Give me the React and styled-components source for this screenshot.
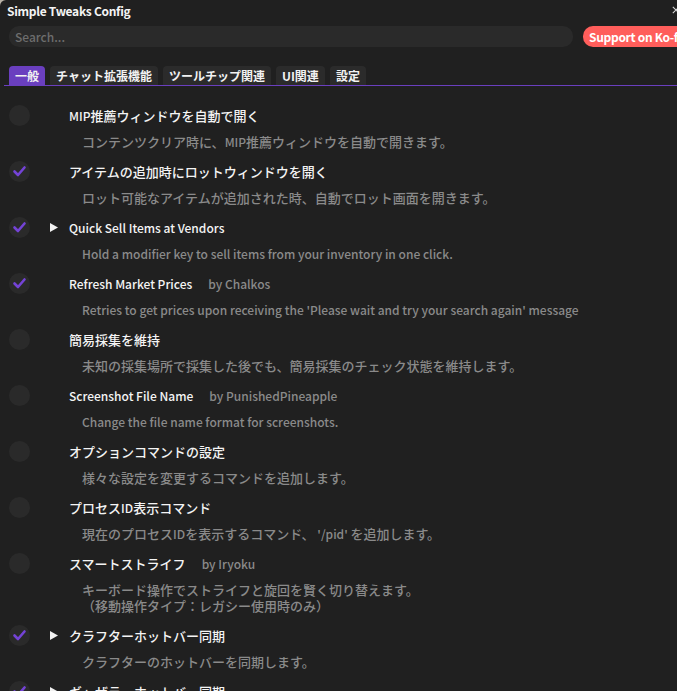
import styled, { createGlobalStyle } from 'styled-components';

const GlobalStyle = createGlobalStyle`
  html, body {
    margin: 0;
    padding: 0;
    background: #b9b2a6;
  }
  body {
    font-family: "Noto Sans CJK JP", "Noto Sans", sans-serif;
  }
`;

const features = [
  { on: false, title: 'MIP推薦ウィンドウを自動で開く', desc: ['コンテンツクリア時に、MIP推薦ウィンドウを自動で開きます。'] },
  { on: true, title: 'アイテムの追加時にロットウィンドウを開く', desc: ['ロット可能なアイテムが追加された時、自動でロット画面を開きます。'] },
  { on: true, arrow: true, title: 'Quick Sell Items at Vendors', desc: ['Hold a modifier key to sell items from your inventory in one click.'] },
  { on: true, title: 'Refresh Market Prices', author: 'Chalkos', desc: ["Retries to get prices upon receiving the 'Please wait and try your search again' message"] },
  { on: false, title: '簡易採集を維持', desc: ['未知の採集場所で採集した後でも、簡易採集のチェック状態を維持します。'] },
  { on: false, title: 'Screenshot File Name', author: 'PunishedPineapple', desc: ['Change the file name format for screenshots.'] },
  { on: false, title: 'オプションコマンドの設定', desc: ['様々な設定を変更するコマンドを追加します。'] },
  { on: false, title: 'プロセスID表示コマンド', desc: ["現在のプロセスIDを表示するコマンド、 '/pid' を追加します。"] },
  { on: false, title: 'スマートストライフ', author: 'Iryoku', desc: ['キーボード操作でストライフと旋回を賢く切り替えます。', '（移動操作タイプ：レガシー使用時のみ）'] },
  { on: true, arrow: true, title: 'クラフターホットバー同期', desc: ['クラフターのホットバーを同期します。'] },
  { on: true, arrow: true, title: 'ギャザラーホットバー同期', desc: ['ギャザラーのホットバーを同期します。'] },
];

const tabs = ['一般', 'チャット拡張機能', 'ツールチップ関連', 'UI関連', '設定'];

// the game font draws latin glyphs a size smaller than the japanese ones
const Mixed = ({ text }) =>
  text.split(/([\x20-\x7e]+)/).filter(Boolean).map((run, i) =>
    /^[\x20-\x7e]+$/.test(run) ? <Latin key={i}>{run}</Latin> : <span key={i}>{run}</span>
  );

const App = () => {
  return (
    <Viewport>
      <GlobalStyle />
      <Window>
        <TitleBar>
          <Title>Simple Tweaks Config</Title>
          <CloseIcon viewBox="0 0 10 10">
            <path d="M1 1 L9 9 M9 1 L1 9" />
          </CloseIcon>
        </TitleBar>

        <SearchRow>
          <Search>Search...</Search>
          <KofiButton>Support on Ko-fi</KofiButton>
        </SearchRow>

        <TabBar>
          {tabs.map((t, i) => (
            <Tab key={t} $active={i === 0}><Mixed text={t} /></Tab>
          ))}
        </TabBar>

        <List>
          {features.map((f) => (
            <Feature key={f.title}>
              <Header>
                <Check>
                  {f.on && (
                    <svg width="21" height="21" viewBox="0 0 21 21">
                      <path d="M5.5 10.5 L9 14 L15.5 6.5" />
                    </svg>
                  )}
                </Check>
                <ArrowSlot>
                  {f.arrow && (
                    <svg width="8" height="9" viewBox="0 0 8 9">
                      <polygon points="0,0 8,4.5 0,9" />
                    </svg>
                  )}
                </ArrowSlot>
                <FeatureTitle><Mixed text={f.title} /></FeatureTitle>
                {f.author && <Author>by {f.author}</Author>}
              </Header>
              <Desc>
                {f.desc.map((line) => (
                  <div key={line}><Mixed text={line} /></div>
                ))}
              </Desc>
            </Feature>
          ))}
        </List>
      </Window>
    </Viewport>
  );
};

const Viewport = styled.div`
  width: 677px;
  height: 691px;
  overflow: hidden;
`;

const Window = styled.div`
  width: 701px;
  height: 760px;
  background: #202020;
  border-top-left-radius: 6px;
  color: #f2f2f2;
`;

const Latin = styled.span`
  font-size: 12px;
`;

const TitleBar = styled.div`
  height: 22px;
  display: flex;
  align-items: center;
  justify-content: space-between;
  padding: 0 21px 0 7px;
`;

const Title = styled.span`
  font-size: 12px;
  font-weight: 700;
  letter-spacing: -0.3px;
  line-height: 22px;
  color: #f4f4f4;
`;

const CloseIcon = styled.svg`
  width: 8px;
  height: 8px;
  margin-top: -2px;
  path {
    stroke: #d8d8d8;
    stroke-width: 1.3;
    fill: none;
  }
`;

const SearchRow = styled.div`
  display: flex;
  gap: 10px;
  padding: 4px 9px 0;
`;

const Search = styled.div`
  flex: 1;
  height: 21px;
  border-radius: 10px;
  background: #2a2a2a;
  color: #6d6d6d;
  font-size: 12px;
  font-weight: 500;
  line-height: 21px;
  padding-left: 6px;
`;

const KofiButton = styled.div`
  width: 109px;
  height: 21px;
  border-radius: 10px;
  background: #ff5e5b;
  color: #ffffff;
  font-size: 12px;
  font-weight: 700;
  letter-spacing: -0.3px;
  line-height: 21px;
  padding-left: 6px;
  box-sizing: border-box;
  white-space: nowrap;
`;

const TabBar = styled.div`
  display: flex;
  gap: 5px;
  margin: 19px 0 0 4px;
  padding-left: 5px;
  border-bottom: 1px solid #6a3fbf;
`;

const Tab = styled.div`
  height: 19px;
  padding: 0 6px;
  border-radius: 4px 4px 0 0;
  background: ${(p) => (p.$active ? '#6a3fbf' : '#2b2b2b')};
  color: #f2f2f2;
  font-size: 12px;
  font-weight: 700;
  line-height: 20px;
`;

const List = styled.div`
  padding: 19px 0 0 9px;
`;

const Feature = styled.div`
  padding-bottom: 11px;
`;

const Header = styled.div`
  display: flex;
  align-items: center;
  height: 21px;
`;

const Check = styled.div`
  width: 21px;
  height: 21px;
  border-radius: 50%;
  background: #2a2a2a;
  flex-shrink: 0;
  svg path {
    stroke: #7443d6;
    stroke-width: 2.6;
    fill: none;
    stroke-linecap: round;
    stroke-linejoin: round;
  }
`;

const ArrowSlot = styled.div`
  width: 19px;
  margin-left: 20px;
  display: flex;
  align-items: center;
  svg polygon {
    fill: #f2f2f2;
  }
`;

const FeatureTitle = styled.span`
  font-size: 13px;
  font-weight: 500;
  color: #f4f4f4;
  white-space: nowrap;
`;

const Author = styled.span`
  margin-left: 16px;
  font-size: 12px;
  font-weight: 500;
  color: #8a8a8a;
  white-space: nowrap;
`;

const Desc = styled.div`
  margin-top: 8px;
  padding-left: 73px;
  font-size: 13px;
  font-weight: 500;
  line-height: 16px;
  color: #8a8a8a;
  white-space: nowrap;
`;

export default App;
